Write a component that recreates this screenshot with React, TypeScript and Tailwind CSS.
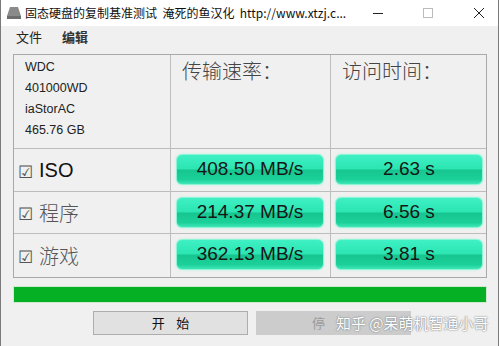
import React from "react";

const cjk = { fontFamily: '"Noto Sans CJK SC", sans-serif' };
const latin = { fontFamily: '"Liberation Sans", Arial, "Noto Sans CJK SC", sans-serif' };

function GreenBtn({ text }: { text: string }) {
  return (
    <div className="h-[31px] rounded-[6px] border border-[#8ff3d6] bg-[linear-gradient(to_bottom,#3ff0c4_0%,#2be5b2_48%,#17c58f_52%,#1bd199_85%,#40e6b8_100%)] flex items-center justify-center text-[19px] text-[#161616] shadow-[0_0_2px_#9ff7dc]" style={latin}>
      {text}
    </div>
  );
}

function Row({ label, latinLabel, speed, time, h }: { label: string; latinLabel?: boolean; speed: string; time: string; h: string }) {
  return (
    <>
      <div className={`${h} border-t border-r border-[#bdbdbd] flex items-center pl-[4px]`}>
        <span className="text-[17px] text-[#555] leading-none" style={cjk}>☑</span>
        {latinLabel ? (
          <span className="ml-[6px] text-[20px] text-[#111]" style={latin}>{label}</span>
        ) : (
          <span className="ml-[6px] text-[20px] text-[#555] font-light" style={cjk}>{label}</span>
        )}
      </div>
      <div className={`${h} border-t border-r border-[#bdbdbd] pt-[5px] pl-[5px] pr-[6px]`}>
        <GreenBtn text={speed} />
      </div>
      <div className={`${h} border-t border-[#bdbdbd] pt-[5px] pl-[4px] pr-[3px]`}>
        <GreenBtn text={time} />
      </div>
    </>
  );
}

export default function App() {
  return (
    <div className="w-[499px] h-[346px] bg-[#f0f0f0] border-x border-[#7a7a7a] overflow-hidden relative">
      {/* title bar */}
      <div className="h-[26px] bg-white flex items-center">
        <div className="ml-[5px] w-[16px] h-[14px] flex items-end">
          <svg width="16" height="14" viewBox="0 0 16 14">
            <path d="M4 1 H12 L15 10 V13 H1 V10 Z" fill="#8a8a8a" />
            <rect x="1" y="10" width="14" height="3" fill="#6d6d6d" />
          </svg>
        </div>
        <span className="ml-[3px] text-[12px] text-[#111] whitespace-nowrap" style={cjk}>
          固态硬盘的复制基准测试&nbsp;&nbsp;淹死的鱼汉化&nbsp;&nbsp;http://www.xtzj.c...
        </span>
        <div className="ml-auto mr-[13px] flex items-center gap-[40px]">
          <div className="w-[10px] h-[1px] bg-[#222]" />
          <div className="w-[10px] h-[10px] border border-[#bbb]" />
          <svg width="12" height="12" viewBox="0 0 12 12">
            <path d="M1 1 L11 11 M11 1 L1 11" stroke="#222" strokeWidth="1" />
          </svg>
        </div>
      </div>
      {/* menu */}
      <div className="h-[22px] flex items-center text-[13px] text-[#222]" style={cjk}>
        <span className="ml-[15px]">文件</span>
        <span className="ml-[20px] font-bold text-[#333]">编辑</span>
      </div>
      {/* table */}
      <div className="mt-[6px] ml-[12px] w-[474px] border border-[#a9a9a9] grid grid-cols-[157px_160px_155px]">
        <div className="h-[93px] border-r border-[#bdbdbd] pl-[11px] pt-[2px] text-[12.5px] leading-[21px] text-[#222]" style={latin}>
          <div>WDC</div>
          <div>401000WD</div>
          <div>iaStorAC</div>
          <div>465.76 GB</div>
        </div>
        <div className="h-[93px] border-r border-[#bdbdbd] pl-[11px] pt-[1px] text-[20px] text-[#444] font-light" style={cjk}>
          传输速率：
        </div>
        <div className="h-[93px] pl-[11px] pt-[1px] text-[20px] text-[#444] font-light" style={cjk}>
          访问时间：
        </div>
        <Row label="ISO" latinLabel speed="408.50 MB/s" time="2.63 s" h="h-[43px]" />
        <Row label="程序" speed="214.37 MB/s" time="6.56 s" h="h-[42px]" />
        <Row label="游戏" speed="362.13 MB/s" time="3.81 s" h="h-[44px]" />
      </div>
      {/* progress */}
      <div className="mt-[8px] ml-[12px] w-[474px] h-[17px] border border-[#cfe8cf] bg-[#06b025]" />
      {/* buttons */}
      <div className="mt-[8px] flex">
        <div className="ml-[92px] w-[155px] h-[24px] border border-[#adadad] bg-[#e1e1e1] flex items-center justify-center text-[13px] text-[#111]" style={cjk}>
          开&nbsp;&nbsp;&nbsp;&nbsp;始
        </div>
        <div className="ml-[8px] w-[155px] h-[24px] bg-[#cccccc] flex items-center pl-[56px] text-[13px] text-[#9a9a9a]" style={cjk}>
          停
        </div>
      </div>
      {/* watermark */}
      <div className="absolute left-[335px] top-[312px] text-[15px] text-white whitespace-nowrap [text-shadow:0_0_1px_#777,0_0_2px_#888]" style={cjk}>
        知乎 @呆萌机智通小哥
      </div>
    </div>
  );
}
